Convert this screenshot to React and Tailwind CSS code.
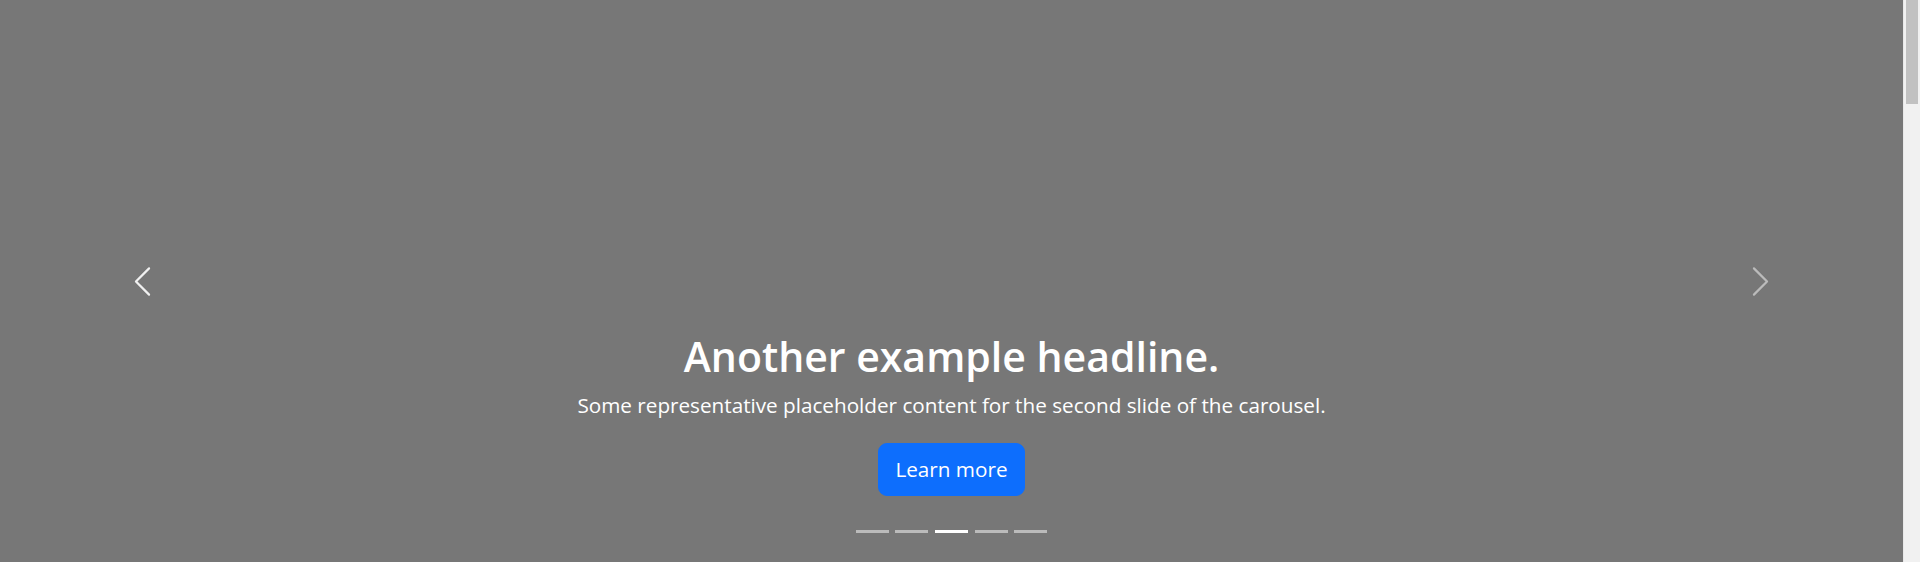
const slides = [0, 1, 2, 3, 4];
const active = 2;

function ChevronLeft() {
  return (
    <svg viewBox="0 0 16 16" className="w-[35px] h-[35px]" fill="white">
      <path d="M11.354 1.646a.5.5 0 0 1 0 .708L5.707 8l5.647 5.646a.5.5 0 0 1-.708.708l-6-6a.5.5 0 0 1 0-.708l6-6a.5.5 0 0 1 .708 0z" />
    </svg>
  );
}

function ChevronRight() {
  return (
    <svg viewBox="0 0 16 16" className="w-[35px] h-[35px]" fill="white">
      <path d="M4.646 1.646a.5.5 0 0 1 .708 0l6 6a.5.5 0 0 1 0 .708l-6 6a.5.5 0 0 1-.708-.708L10.293 8 4.646 2.354a.5.5 0 0 1 0-.708z" />
    </svg>
  );
}

function Carousel() {
  return (
    <div className="relative h-[562px] bg-[#777] overflow-hidden">
      {/* caption */}
      <div className="h-full flex flex-col justify-end items-center text-center text-white pb-[66px] px-[15%]">
        <h1 className="text-[41px] leading-[53px] font-semibold mb-[7px]">Another example headline.</h1>
        <p className="text-[20.7px] leading-[31px] mb-[22px]">
          Some representative placeholder content for the second slide of the carousel.
        </p>
        <div>
          <a href="#" className="inline-block bg-[#0d6efd] border border-[#0d6efd] text-white text-[20.7px] leading-[33px] py-[9px] px-[16px] rounded-[9px]">
            Learn more
          </a>
        </div>
      </div>

      {/* controls */}
      <button className="absolute inset-y-0 left-0 w-[15%] flex items-center justify-center opacity-90">
        <ChevronLeft />
      </button>
      <button className="absolute inset-y-0 right-0 w-[15%] flex items-center justify-center opacity-50">
        <ChevronRight />
      </button>

      {/* indicators */}
      <div className="absolute left-0 right-0 bottom-[29px] flex justify-center gap-[6.6px]">
        {slides.map((i) => (
          <span
            key={i}
            className={i === active ? "block w-[33px] h-[3px] bg-white" : "block w-[33px] h-[3px] bg-white opacity-50"}
          />
        ))}
      </div>
    </div>
  );
}

export default function App() {
  return (
    <div className="h-[562px] overflow-hidden flex bg-white" style={{ fontFamily: '"Open Sans", "Noto Sans", sans-serif' }}>
      <main className="flex-1 min-w-0">
        <Carousel />
      </main>
      {/* page scrollbar */}
      <div className="w-[17px] bg-[#f1f1f1] border-l border-[#e8e8e8] px-[2px]">
        <div className="h-[104px] bg-[#c1c1c1]" />
      </div>
    </div>
  );
}
